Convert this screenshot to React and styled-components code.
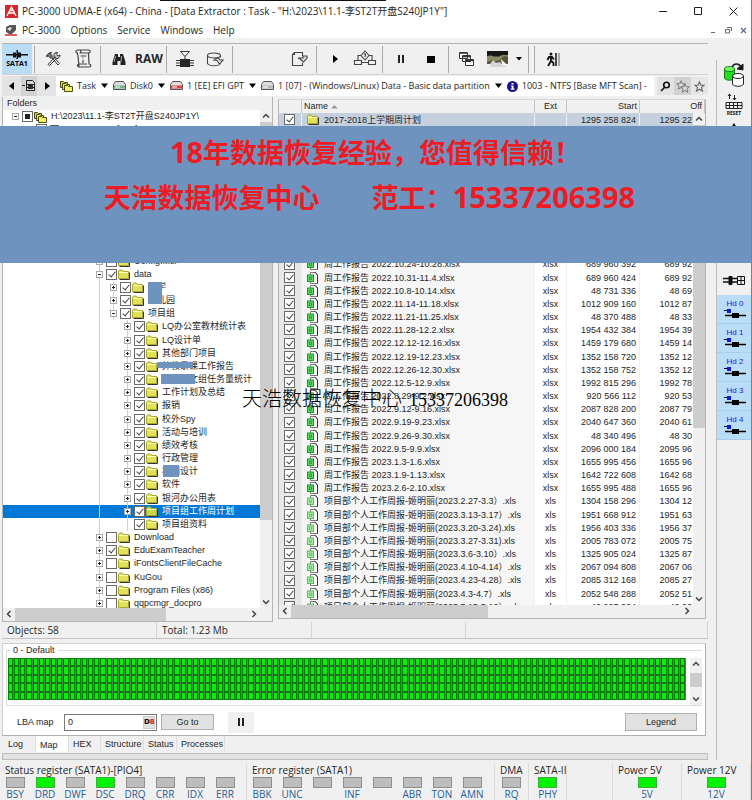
import React, { useState } from 'react'
import styled, { createGlobalStyle, css } from 'styled-components'

const GlobalStyle = createGlobalStyle`
  * {
    box-sizing: border-box;
  }
  body {
    margin: 0;
    background: #f0f0f0;
  }
  button, input {
    margin: 0;
    padding: 0;
    font: inherit;
    color: inherit;
  }
`

const uiFont = '"Open Sans", "Noto Sans CJK SC", sans-serif'
const gridFont = '"Liberation Sans", "Noto Sans CJK SC", sans-serif'

const Window = styled.div`
  position: relative;
  display: flex;
  flex-direction: column;
  height: 100vh;
  overflow: hidden;
  border-right: 1px solid #6f8299;
  background: #f0f0f0;
  color: #262626;
  font: 10px/14px ${uiFont};
`

const TitleBar = styled.header`
  position: relative;
  display: flex;
  align-items: center;
  height: 20px;
  padding: 2px 11px 0 5px;
  background: #fff;
  white-space: nowrap;
  &::before {
    content: '';
    position: absolute;
    top: 0;
    left: 160px;
    width: 226px;
    height: 1px;
    background: #111;
  }
`

const Title = styled.h1`
  flex: 1;
  margin: 0 0 0 4px;
  font-size: 10px;
  font-weight: 400;
`

const WindowButtons = styled.div`
  display: flex;
  gap: ${p => (p.$small ? '1px' : '21px')};
`

const PlainButton = styled.button`
  display: flex;
  align-items: center;
  justify-content: center;
  width: ${p => p.$w || 14}px;
  height: ${p => p.$h || 14}px;
  border: 0;
  background: ${p => p.$bg || 'none'};
`

const MenuBar = styled.nav`
  display: flex;
  align-items: center;
  height: 18px;
  padding: 2px 1px 0 5px;
  background: #fff;
`

const MenuItems = styled.div`
  display: flex;
  flex: 1;
  gap: 10px;
  padding-left: 5px;
`

const MenuItem = styled.button`
  border: 0;
  background: none;
`

const Body = styled.div`
  display: flex;
  flex: 1;
  min-height: 0;
`

const Main = styled.main`
  display: flex;
  flex: 1;
  flex-direction: column;
  min-width: 0;
  padding: 5px 8px 0 2px;
`

const Toolbar = styled.div`
  display: flex;
  align-items: center;
  height: 32px;
  border-top: 1px solid #b4b4b4;
  border-bottom: 1px solid #d0d0d0;
`

const ToolButton = styled(PlainButton)`
  width: 30px;
  height: 30px;
  font-size: 12px;
  font-weight: 700;
`

const SataButton = styled(ToolButton)`
  flex-direction: column;
  background: #b9dcf7;
  font-size: 7px;
  line-height: 9px;
  color: #000;
`

const Divider = styled.span`
  width: 1px;
  height: 27px;
  margin: 0 3px 0 2px;
  background: #a9a9a9;
`

const ToolGap = styled.span`
  width: 48px;
`

const DropButton = styled(PlainButton)`
  width: 14px;
  height: 30px;
`

const PathBar = styled.div`
  display: flex;
  align-items: center;
  height: 20px;
  margin: 1px 0;
  white-space: nowrap;
`

const NavButtons = styled.div`
  display: flex;
  background: #e3e3e3;
`

const Crumbs = styled.div`
  display: flex;
  flex: 1;
  align-items: center;
  gap: 4px;
  height: 20px;
  min-width: 0;
  margin-right: 3px;
  padding-left: 4px;
  overflow: hidden;
  background: #fff;
  font-size: 9px;
`

const Crumb = styled.button`
  display: flex;
  align-items: center;
  gap: 4px;
  flex: none;
  border: 0;
  background: none;
`

const Workspace = styled.div`
  display: flex;
  flex: 1;
  gap: 5px;
  min-height: 0;
  padding-right: 2px;
  font: 9px/13px ${gridFont};
`

const TreePanel = styled.section`
  display: flex;
  flex: 0 0 271px;
  flex-direction: column;
  border: 1px solid #b5b5b5;
  border-top: 0;
  background: #fff;
`

const PanelTitle = styled.h2`
  height: 13px;
  margin: 0;
  padding-left: 4px;
  background: #f0f0f0;
  font-size: 9px;
  font-weight: 400;
`

const Scroller = styled.div`
  display: flex;
  flex: 1;
  min-height: 0;
`

const TreeRows = styled.ul`
  flex: 1;
  min-width: 0;
  margin: 0;
  padding: 0;
  overflow: hidden;
  list-style: none;
`

const TreeRow = styled.li`
  position: relative;
  display: flex;
  align-items: center;
  gap: 1px;
  height: 13px;
  padding-left: 7px;
  white-space: nowrap;
  &:nth-child(6n) {
    height: 14px;
  }
  ${p => p.$selected && css`
    background: #0078d7;
    color: #fff;
  `}
`

const Guides = styled.span`
  display: flex;
  align-self: stretch;
  margin-right: -1px;
`

const Guide = styled.span`
  width: 14px;
  background: ${p => (p.$line ? 'linear-gradient(#d0d0d0, #d0d0d0) 5px 0 / 1px 100% no-repeat' : 'none')};
`

const Joint = styled.span`
  display: flex;
  align-items: center;
  align-self: stretch;
  justify-content: center;
  width: 11px;
  background: ${p => (p.$line ? 'linear-gradient(#d0d0d0, #d0d0d0) 5px 0 / 1px 100% no-repeat' : 'none')};
`

const Expander = styled.button`
  display: flex;
  width: 7px;
  height: 7px;
  border: 1px solid #a8a8a8;
  background: #fff;
`

const Check = styled.input.attrs({ type: 'checkbox' })`
  appearance: none;
  position: relative;
  flex: none;
  width: 11px;
  height: 11px;
  border: 1px solid #6a6a6a;
  background: #fff;
  &:checked::before {
    content: '';
    position: absolute;
    top: 0;
    left: 3px;
    width: 3px;
    height: 6px;
    border: solid #444;
    border-width: 0 1px 1px 0;
    transform: rotate(40deg);
  }
  ${p => p.$mixed && css`
    &::before {
      content: '';
      position: absolute;
      inset: 2px;
      background: #222;
    }
  `}
`

const TreeLabel = styled.label`
  display: flex;
  align-items: center;
  gap: 1px;
`

const TreeName = styled.span`
  margin-left: 3px;
`

const Patch = styled.span`
  position: absolute;
  z-index: 1;
  left: ${p => p.$x}px;
  top: ${p => p.$y}px;
  width: ${p => p.$w}px;
  height: ${p => p.$h}px;
  background: #6f93bf;
`

const VBar = styled.div`
  display: flex;
  flex: none;
  flex-direction: column;
  width: 12px;
  background: #f0f0f0;
  ${p => p.$over && css`
    position: absolute;
    top: 13px;
    right: 0;
    bottom: 0;
  `}
`

const HBar = styled.div`
  display: flex;
  flex: none;
  height: 13px;
  background: #f0f0f0;
`

const Thumb = styled.div`
  flex: ${p => p.$size};
  background: #cdcdcd;
`

const Track = styled.div`
  flex: ${p => p.$size};
`

const ListPanel = styled.section`
  display: flex;
  flex: 1;
  flex-direction: column;
  min-width: 0;
  margin: 2px 0 3px;
  border: 1px solid #b5b5b5;
  border-top-color: #d8d8d8;
  background: #fff;
`

const ListArea = styled.div`
  position: relative;
  flex: 1;
  min-height: 0;
  overflow: hidden;
`

const FileTable = styled.table`
  width: 100%;
  border-collapse: separate;
  border-spacing: 0;
  table-layout: fixed;
  white-space: nowrap;
`

const HeadCell = styled.th`
  height: 13px;
  padding: 0 2px;
  overflow: hidden;
  border-right: 1px solid #c4c4c4;
  background: #f0f0f0;
  font-weight: 400;
  text-align: ${p => p.$align || 'left'};
`

const FileRow = styled.tr`
  height: 13px;
  &:nth-child(6n) {
    height: 14px;
  }
  td {
    padding: 0 3px;
    overflow: hidden;
    border-right: 1px solid #f0f0f0;
    line-height: 12px;
    background: ${p => (p.$selected ? '#c5d0de' : '#fff')};
  }
  td:first-child {
    padding-left: 5px;
    background: ${p => (p.$selected ? '#c5d0de' : '#e6e6e6')};
  }
  td:nth-child(2) {
    background: ${p => (p.$selected ? '#c5d0de' : '#f6f6f6')};
  }
`

const CheckWrap = styled.span`
  display: flex;
`

const NameBox = styled.span`
  display: flex;
  align-items: center;
  gap: 5px;
  height: 12px;
  padding-left: 2px;
`

const NumCell = styled.td`
  text-align: right;
`

const OffsetCell = styled(NumCell)`
  && {
    padding-right: 12px;
  }
`

const ExtCell = styled.td`
  text-align: center;
`

const StatusBar = styled.div`
  display: grid;
  grid-template-columns: 155px 155px 154px 1fr;
  height: 17px;
  border-bottom: 1px solid #c2c2c2;
`

const StatusCell = styled.span`
  padding: 1px 5px;
  border-right: 1px solid #d4d4d4;
`

const MapPanel = styled.section`
  margin: 4px 2px 0 0;
  padding: 6px 3px 2px;
  border: 1px solid #d0d0d0;
  border-right-color: #b0b0b0;
  border-bottom-color: #b0b0b0;
  background: #fff;
  font: 9px/13px ${gridFont};
`

const MapGroup = styled.fieldset`
  position: relative;
  display: flex;
  height: 56px;
  margin: 0;
  padding: 7px 0 0 1px;
  border: 1px solid #dcdcdc;
  border-right: 0;
`

const MapTitle = styled.span`
  position: absolute;
  top: -7px;
  left: 3px;
  padding: 0 3px;
  background: #fff;
`

const MapGrid = styled.div`
  display: grid;
  flex: 1;
  grid-template-columns: repeat(110, 1fr);
  grid-template-rows: repeat(5, 1fr);
  height: 42px;
  margin-right: 4px;
  background: #5f7d5f;
`

const MapCell = styled.span`
  margin-right: 1px;
  border: 1px solid #0a7a0a;
  background: #00f400;
`

const MapTools = styled.div`
  display: flex;
  align-items: center;
  height: 22px;
  margin-top: 5px;
  padding: 0 5px 0 11px;
`

const LbaLabel = styled.label`
  width: 47px;
`

const LbaBox = styled.span`
  display: flex;
  align-items: center;
  width: 93px;
  height: 17px;
  padding-right: 1px;
  border: 1px solid #7a7a7a;
`

const LbaInput = styled.input`
  flex: 1;
  width: 0;
  padding-left: 3px;
  border: 0;
  outline: 0;
`

const RadixButton = styled.button`
  width: 12px;
  height: 13px;
  border: 1px solid #ccc;
  background: #e1e1e1;
  font: bold 7px/9px "DejaVu Sans", sans-serif;
  color: #000;
  b {
    color: #e01010;
  }
`

const PushButton = styled.button`
  width: ${p => p.$w}px;
  height: ${p => p.$h || 16}px;
  margin-left: ${p => (p.$end ? 'auto' : '4px')};
  border: 1px solid #b0b0b0;
  background: #e1e1e1;
`

const PauseButton = styled(PlainButton)`
  width: 26px;
  height: 21px;
  margin-left: 14px;
  background: #f0f0f0;
`

const Tabs = styled.div`
  display: flex;
  height: 16px;
  padding-left: 2px;
  font: 9px/13px ${gridFont};
`

const Tab = styled.button`
  width: ${p => p.$w}px;
  height: ${p => (p.$active ? 16 : 15)}px;
  padding: 2px 4px 0;
  border: 0;
  border-right: 1px solid #dedede;
  background: ${p => (p.$active ? '#fff' : 'none')};
  text-align: left;
`

const Ledge = styled.div`
  height: 7px;
  margin: 1px 0 4px;
  border: 1px solid #bdbdbd;
  background: #e3e3e3;
`

const Rail = styled.aside`
  display: flex;
  flex: 0 0 35px;
  flex-direction: column;
  align-items: stretch;
  margin: 22px 0 4px;
  border-left: 1px solid #bdbdbd;
`

const RailButton = styled.button`
  display: flex;
  align-items: center;
  justify-content: center;
  height: ${p => p.$h || 29}px;
  border: 0;
  background: none;
`

const RailSpace = styled.span`
  height: 134px;
`

const HeadButton = styled.button`
  display: flex;
  flex-direction: column;
  align-items: center;
  height: 29px;
  padding: 4px 0 0 2px;
  border: 0;
  border-bottom: 1px solid #a9cdea;
  background: #b9dcf7;
  color: #1a1ae0;
  font: 8px/10px "Liberation Sans", sans-serif;
`

const Registers = styled.footer`
  display: flex;
  height: 36px;
  white-space: nowrap;
`

const Register = styled.section`
  flex: ${p => (p.$w ? `0 0 ${p.$w}px` : '1')};
  border-right: 1px solid #dadada;
`

const RegisterTitle = styled.h2`
  height: 13px;
  margin: 0;
  padding-left: 5px;
  font-size: 10px;
  font-weight: 400;
  line-height: 12px;
`

const Bits = styled.div`
  display: flex;
  justify-content: ${p => (p.$center ? 'center' : 'flex-start')};
`

const Bit = styled.div`
  display: flex;
  flex-direction: column;
  align-items: center;
  width: 30px;
  line-height: 13px;
  color: #2a5d92;
  &::before {
    content: '';
    width: 17px;
    height: 9px;
    border: 1px solid ${p => (p.$on ? '#3fae3f' : '#8e8e8e')};
    background: ${p => (p.$on ? '#00f400' : '#bdbdbd')};
  }
`

const Banner = styled.div`
  position: absolute;
  top: 126px;
  left: 0;
  right: 0;
  z-index: 2;
  height: 137px;
  padding-top: 3px;
  background: #6f93bf;
  color: #ed1c24;
  font: 700 27px/45px "Noto Sans CJK SC", sans-serif;
  text-align: center;
  white-space: pre;
`

const BannerNumber = styled.span`
  font: 700 29px/45px "Noto Sans", sans-serif;
`

const BannerGap = styled.span`
  display: inline-block;
  width: 52px;
`

const Watermark = styled.div`
  position: absolute;
  top: 386px;
  left: 242px;
  z-index: 2;
  color: #000;
  font: 300 20px/24px "Noto Sans CJK SC", sans-serif;
  white-space: nowrap;
`

const WatermarkNumber = styled.span`
  margin-left: 7px;
  font: 18px/24px "Liberation Serif", serif;
`

const Chevron = ({ dir }) => {
  const paths = {
    up: 'M3 7.5 6 4.5 9 7.5',
    down: 'M3 4.5 6 7.5 9 4.5',
    left: 'M7.5 3 4.5 6 7.5 9',
    right: 'M4.5 3 7.5 6 4.5 9',
  }
  return (
    <svg width="12" height="12" viewBox="0 0 12 12" fill="none" stroke="#444" strokeWidth="1.5">
      <path d={paths[dir]} />
    </svg>
  )
}

const Folder = ({ open }) => (
  <svg width="12" height="11" viewBox="0 0 12 11">
    <path d="M1.5 10.5h10v-7" fill="none" stroke="#333" />
    <path d="M.5 2.5l1-1.5h3l1 1.5h5v7H.5z" fill={open ? '#c9d84a' : '#e2e25a'} stroke="#a8a832" />
    <path d="M1 3.5h9" stroke="#fbfbb8" />
  </svg>
)

const Folders = () => (
  <svg width="13" height="12" viewBox="0 0 13 12" stroke="#4c4c10">
    <path d="M.5 1.5h3l1 1h3v5h-7z" fill="#d8d83c" />
    <path d="M2.5 3.5h3l1 1h3v5h-7z" fill="#e6e650" />
    <path d="M4.5 5.5h3l1 1h4v5h-8z" fill="#f0f060" />
  </svg>
)

const Disk = ({ color }) => (
  <svg width="13" height="10" viewBox="0 0 13 10">
    <path d="M2.5.5h8l2 3v5h-12v-5z" fill="#ddd" stroke="#555" />
    <path d="M1 4.5h11v3H1z" fill={color || '#bbb'} />
    <path d="M2 6h5" stroke="#fff" />
  </svg>
)

const FileIcon = ({ pale }) => (
  <svg width="12" height="12" viewBox="0 0 12 12">
    <path d="M3.5.5H8L10.500 3v8.500h-7z" fill="#fff" stroke="#777" />
    <path d="M7.500.5h1l2 2.500v8.500" fill="none" stroke="#333" />
    <rect x=".5" y="3" width="6" height="6.500" fill={pale ? '#a4e8a4' : '#5fd65f'} stroke={pale ? '#5cc05c' : '#149a2c'} />
    <path d="M2.500 5h2v2.500h-2z" fill="none" stroke={pale ? '#5cc05c' : '#149a2c'} strokeWidth=".8" />
  </svg>
)

const Caret = () => (
  <svg width="9" height="6" viewBox="0 0 9 6"><path d="M1 .5h7L4.500 5z" fill="#000" /></svg>
)

const HeadDrive = () => (
  <svg width="24" height="10" viewBox="0 0 24 10">
    <path d="M1 1.500h6" stroke="#000" />
    <rect x="4" y="0" width="4" height="4" fill="#1414e6" />
    <path d="M2 6.500h21" stroke="#000" strokeWidth="1.500" />
    <rect x="9" y="4" width="7" height="5" fill="#000" />
  </svg>
)

const tools = {
  hammers: (
    <svg width="16" height="16" viewBox="0 0 16 16" fill="none" stroke="#333">
      <path d="M3 13.500 10 6M4.500 14.500 11.500 7.500M3 13.500l1.500 1" />
      <path d="M9 4.500c0-2 1.500-3.500 3.500-3l-1 2 1.500 1.500 2-1c.3 2-1.500 3.500-3.500 3.500z" fill="#ccc" />
      <path d="M1.500 5.500c.5-2.500 2.500-4 5-4L5.500 3 8 5.500 6 7.500 3.500 5z" fill="#777" />
      <path d="M7 7l6 7 1.500-1.500L8.500 6" />
    </svg>
  ),
  script: (
    <svg width="18" height="20" viewBox="0 0 18 20" fill="none" stroke="#444" strokeWidth="1.200">
      <path d="M3.500 6V4c-2 0-2.500-2.500 0-3h11c2.500.5 2 3 0 3h-9c2 0 2 -3-.5-3M4 6c0 5 1 8 1 12h10c2.500 0 2.500-3 0-3 0-5-.5-7-.5-11M5 18c-2-.5-2-3 0-3h8" />
      <path d="M9 8.500v1M9 11v3M6.500 7h6" />
    </svg>
  ),
  search: (
    <svg width="14" height="13" viewBox="0 0 14 13" fill="#222">
      <path d="M3 1h3v3h2V1h3l2.500 8v3H8.500V8h-3v4H.5V9z" />
      <path d="M3.500 3 2 9M9.500 3 9 9" stroke="#aaa" />
    </svg>
  ),
  chip: (
    <svg width="20" height="18" viewBox="0 0 20 18" fill="none" stroke="#333">
      <path d="M5.500 1.500h9L10 6.500zM10 6.500v4" />
      <rect x="5" y="9" width="10" height="8" fill="#222" stroke="none" />
      <path d="M1 10.500h18M1 13h18M1 15.500h18" strokeWidth="1.200" />
    </svg>
  ),
  diskOut: (
    <svg width="19" height="15" viewBox="0 0 19 15" fill="none" stroke="#444" strokeWidth="1.100">
      <ellipse cx="8" cy="3.500" rx="6.500" ry="2.500" />
      <path d="M1.500 3.500v8c2 3 11 3 13 0M14.500 3.500v2M8 8c2-2.500 5-2 6 0h3l-3.500 4L11 8.500c-1-.5-2-.8-3-.5z" />
    </svg>
  ),
  pageOut: (
    <svg width="17" height="16" viewBox="0 0 17 16" fill="none" stroke="#444" strokeWidth="1.100">
      <path d="M11.500 5V1.500h-8l-2 2v11h10V12M3.500 1.500v2h-2" />
      <path d="M7 7h5V5h4v2l-3.500 4L9 8z" fill="#ddd" />
    </svg>
  ),
  play: <svg width="8" height="10" viewBox="0 0 8 10"><path d="M2 1v8l5-4z" fill="#000" /></svg>,
  flow: (
    <svg width="24" height="18" viewBox="0 0 24 18" fill="none" stroke="#444" strokeWidth="1.100">
      <path d="M12 1l4 4.500-4 4.500-4-4.500zM8 5.500H5v5M16 5.500h3v5M11 4.500c1-1.500 2.500 0 1 1.500v1" />
      <path d="M1.500 10.500h7v4h-7zM15.500 10.500h7v4h-7zM9 12.500h6" />
    </svg>
  ),
  pause: <svg width="8" height="10" viewBox="0 0 8 10"><path d="M1 1h2v8H1zM5 1h2v8H5z" fill="#222" /></svg>,
  stop: <svg width="8" height="8" viewBox="0 0 8 8"><path d="M0 1h8v7H0z" fill="#000" /></svg>,
  windows: (
    <svg width="16" height="16" viewBox="0 0 16 16" fill="#fff" stroke="#333">
      <path d="M.5 1.500h8v6h-8zM3.500 4.500h8v6h-8zM6.500 8.500h8v6h-8z" />
      <path d="M1 2h7M4 5.500h7M7 9.500h7" strokeWidth="1.500" />
    </svg>
  ),
  photo: (
    <svg width="21" height="16" viewBox="0 0 21 16">
      <path d="M0 0h21v13H0z" fill="#8a8a62" />
      <path d="M0 0h21v4h-6l-3 1.500H7L4 4.500 0 5z" fill="#171714" />
      <path d="M0 11l5-2 3 1.500 5-1.500 4-4 4 1v7H0z" fill="#55553a" />
      <path d="M3 13l3-4 3 3 4-1 2 3 4-2v4H4z" fill="#d6d6d6" />
      <path d="M14 8l5 5v2l-4-1z" fill="#f6f6f6" />
    </svg>
  ),
  exit: (
    <svg width="15" height="15" viewBox="0 0 15 15">
      <circle cx="5" cy="2" r="1.500" fill="#111" />
      <path d="M5 4v5L2 14M5 8.500l2.500 2.500v3M1.500 8 3 5h3l2 2.500" fill="none" stroke="#111" strokeWidth="1.800" />
      <path d="M9 1h2v13H9z" fill="#444" />
      <path d="M12 1h2v13h-2z" fill="#a8a8a8" />
    </svg>
  ),
}

const toolGroups = [
  ['hammers', 'script'],
  ['search', 'RAW'],
  ['chip', 'diskOut'],
  ['gap', 'pageOut'],
  ['play', 'flow'],
  ['pause', 'stop'],
  ['windows', 'photo', 'drop'],
  [],
  ['exit'],
]

const crumbs = [
  { icon: <Folders />, text: 'Task' },
  { icon: <Disk color="#7fb08a" />, text: 'Disk0' },
  { icon: <Disk color="#e04040" />, text: '1 [EE] EFI GPT' },
  { icon: <Disk />, text: '1 [07] - (Windows/Linux) Data - Basic data partition' },
]

const blank = n => Array.from({ length: n }, () => null)

const tree = [
  { level: 0, name: 'H:\\2023\\11.1-李ST2T开盘S240JP1Y\\', icon: 'root', open: true, mixed: true },
  { level: 1, name: '0: 500000 G [T4..]', icon: 'disk', open: true },
  ...blank(9),
  { level: 6, name: 'Config.Msi' },
  { level: 6, name: 'data', open: true, checked: true },
  { level: 7, name: '大学', checked: true, patch: { x: 145, y: 1, w: 14, h: 13 } },
  { level: 7, name: '幼儿园', checked: true, patch: { x: 145, y: 0, w: 14, h: 10 } },
  { level: 7, name: '项目组', open: true, checked: true },
  { level: 8, name: 'LQ办公室教材统计表', checked: true },
  { level: 8, name: 'LQ设计单', checked: true },
  { level: 8, name: '其他部门项目', checked: true },
  { level: 8, name: '外教录课工作报告', checked: true, patch: { x: 154, y: 2, w: 36, h: 6 } },
  { level: 8, name: '小学语文组任务量统计', checked: true, patch: { x: 158, y: 1, w: 34, h: 10 } },
  { level: 8, name: '工作计划及总结', checked: true },
  { level: 8, name: '报销', checked: true },
  { level: 8, name: '校外Spy', checked: true },
  { level: 8, name: '活动与培训', checked: true },
  { level: 8, name: '绩效考核', checked: true },
  { level: 8, name: '行政管理', checked: true },
  { level: 8, name: '校园设计', checked: true, patch: { x: 160, y: 0, w: 16, h: 12 } },
  { level: 8, name: '软件', checked: true },
  { level: 8, name: '银河办公用表', checked: true },
  { level: 8, name: '项目组工作周计划', checked: true, selected: true },
  { level: 8, name: '项目组资料', checked: true, leaf: true },
  { level: 6, name: 'Download' },
  { level: 6, name: 'EduExamTeacher', checked: true },
  { level: 6, name: 'iFontsClientFileCache' },
  { level: 6, name: 'KuGou' },
  { level: 6, name: 'Program Files (x86)' },
  { level: 6, name: 'qqpcmgr_docpro' },
]

const weekly = (dates, start, offset) => ({ name: `周工作报告 ${dates}.xlsx`, ext: 'xlsx', start, offset })
const personal = (dates, start, offset) => ({ name: `项目部个人工作周报-姬明丽(${dates}.xls`, ext: 'xls', start, offset })

const files = [
  { name: '2017-2018上学期周计划', ext: '', start: '1295 258 824', offset: '1295 22', folder: true },
  ...blank(10),
  weekly('2022.10.24-10.28', '689 960 392', '689 92'),
  weekly('2022.10.31-11.4', '689 960 424', '689 92'),
  weekly('2022.10.8-10.14', '48 731 336', '48 69'),
  weekly('2022.11.14-11.18', '1012 909 160', '1012 87'),
  weekly('2022.11.21-11.25', '48 370 488', '48 33'),
  weekly('2022.11.28-12.2', '1954 432 384', '1954 39'),
  weekly('2022.12.12-12.16', '1459 179 680', '1459 14'),
  weekly('2022.12.19-12.23', '1352 158 720', '1352 12'),
  weekly('2022.12.26-12.30', '1352 158 752', '1352 12'),
  weekly('2022.12.5-12.9', '1992 815 296', '1992 78'),
  weekly('2022.8.29-9.2', '920 566 112', '920 53'),
  weekly('2022.9.12-9.16', '2087 828 200', '2087 79'),
  weekly('2022.9.19-9.23', '2040 647 360', '2040 61'),
  weekly('2022.9.26-9.30', '48 340 496', '48 30'),
  weekly('2022.9.5-9.9', '2096 000 184', '2095 96'),
  weekly('2023.1.3-1.6', '1655 995 456', '1655 96'),
  weekly('2023.1.9-1.13', '1642 722 608', '1642 68'),
  weekly('2023.2.6-2.10', '1655 995 488', '1655 96'),
  personal('2023.2.27-3.3）', '1304 158 296', '1304 12'),
  personal('2023.3.13-3.17）', '1951 668 912', '1951 63'),
  personal('2023.3.20-3.24)', '1956 403 336', '1956 37'),
  personal('2023.3.27-3.31)', '2005 783 072', '2005 75'),
  personal('2023.3.6-3.10）', '1325 905 024', '1325 87'),
  personal('2023.4.10-4.14）', '2067 094 808', '2067 06'),
  personal('2023.4.23-4.28）', '2085 312 168', '2085 27'),
  personal('2023.4.3-4.7）', '2052 548 288', '2052 51'),
  personal('2023.5.15-5.19）', '40 997 024', '40 96'),
]

const registers = [
  { title: 'Status register (SATA1)-[PIO4]', w: 247, bits: ['BSY', 'DRD', 'DWF', 'DSC', 'DRQ', 'CRR', 'IDX', 'ERR'] },
  { title: 'Error register (SATA1)', w: 248, bits: ['BBK', 'UNC', '', 'INF', '', 'ABR', 'TON', 'AMN'] },
  { title: 'DMA', w: 34, center: true, bits: ['RQ'] },
  { title: 'SATA-II', w: 38, center: true, bits: ['PHY'] },
  { title: '', bits: [] },
  { title: 'Power 5V', w: 69, center: true, bits: ['5V'] },
  { title: 'Power 12V', w: 69, center: true, bits: ['12V'] },
]
const lit = ['DRD', 'DSC', 'PHY', '5V', '12V']

const tabs = [['Log', 32], ['Map', 33], ['HEX', 32], ['Structure', 43], ['Status', 33], ['Processes', 48]]

const TreeItem = ({ item }) => {
  const [checked, setChecked] = useState(!!item.checked)
  const { level, name, icon, open, mixed, leaf, patch, selected } = item
  return (
    <TreeRow $selected={selected}>
      <Guides>
        {Array.from({ length: level }, (_, i) => <Guide key={i} $line={i === 6} />)}
      </Guides>
      <Joint $line={level > 5}>
        {!leaf && (
          <Expander aria-label={open ? 'Collapse' : 'Expand'}>
            <svg width="5" height="5" viewBox="0 0 5 5" stroke="#222">
              <path d={open ? 'M1 2.5h3' : 'M1 2.5h3M2.5 1v3'} />
            </svg>
          </Expander>
        )}
      </Joint>
      <TreeLabel>
        <Check checked={checked} $mixed={mixed} onChange={() => setChecked(!checked)} />
        {icon === 'root' && <Folders />}
        {icon === 'disk' && <Disk />}
        {!icon && <Folder open={selected} />}
        <TreeName>{name}</TreeName>
      </TreeLabel>
      {patch && <Patch $x={patch.x} $y={patch.y} $w={patch.w} $h={patch.h} />}
    </TreeRow>
  )
}

const FileList = () => (
  <ListPanel>
    <ListArea>
      <FileTable>
        <colgroup>
          <col width="23" />
          <col />
          <col width="32" />
          <col width="73" />
          <col width="65" />
        </colgroup>
        <thead>
          <tr>
            <HeadCell />
            <HeadCell>Name <svg width="7" height="5" viewBox="0 0 7 5"><path d="M0 4.500h7L3.500 1z" fill="#999" /></svg></HeadCell>
            <HeadCell $align="center">Ext</HeadCell>
            <HeadCell $align="right">Start</HeadCell>
            <HeadCell $align="right">Off</HeadCell>
          </tr>
        </thead>
        <tbody>
          {files.map((file, i) => (file ? (
            <FileRow key={i} $selected={file.folder}>
              <td><CheckWrap><Check defaultChecked aria-label={file.name} /></CheckWrap></td>
              <td>
                <NameBox>
                  {file.folder ? <Folder /> : <FileIcon pale={file.ext === 'xls'} />}
                  <span>{file.name}</span>
                </NameBox>
              </td>
              <ExtCell>{file.ext}</ExtCell>
              <NumCell>{file.start}</NumCell>
              <OffsetCell>{file.offset}</OffsetCell>
            </FileRow>
          ) : <FileRow key={i}><td colSpan="5" /></FileRow>))}
        </tbody>
      </FileTable>
      <VBar $over>
        <Chevron dir="up" />
        <Thumb $size={64} />
        <Track $size={35} />
        <Chevron dir="down" />
      </VBar>
    </ListArea>
    <HBar>
      <Chevron dir="left" />
      <Thumb $size={50} />
      <Track $size={49} />
      <Chevron dir="right" />
      <VBar />
    </HBar>
  </ListPanel>
)

const App = () => {
  const [tab, setTab] = useState('Map')
  const [lba, setLba] = useState('0')
  return (
    <>
      <GlobalStyle />
      <Window>
        <TitleBar>
          <svg width="13" height="13" viewBox="0 0 13 13">
            <path d="M0 0h13v13H0z" fill="#d8262c" />
            <path d="M2 11 6.500 2 11 11M3.500 8h6M4.500 5.500h4" fill="none" stroke="#fff" strokeWidth="1.300" />
          </svg>
          <Title>PC-3000 UDMA-E (x64) - China - [Data Extractor : Task - "H:\2023\11.1-李ST2T开盘S240JP1Y"]</Title>
          <WindowButtons>
            <PlainButton aria-label="Minimize"><svg width="9" height="9" viewBox="0 0 9 9" stroke="#222"><path d="M0 4.500h8" /></svg></PlainButton>
            <PlainButton aria-label="Maximize"><svg width="9" height="9" viewBox="0 0 9 9" fill="none" stroke="#222"><path d="M.5.5h7v7h-7z" /></svg></PlainButton>
            <PlainButton aria-label="Close"><svg width="9" height="9" viewBox="0 0 9 9" stroke="#222"><path d="M.5.5l8 8M8.500.5l-8 8" /></svg></PlainButton>
          </WindowButtons>
        </TitleBar>
        <MenuBar>
          <svg width="12" height="12" viewBox="0 0 12 12">
            <path d="M1 3 5 1h6v5l-4 4H4L1 8z" fill="#555" />
            <path d="M2 5l3-2 2 1-2 3z" fill="#ddd" />
            <path d="M0 11h12" stroke="#d8262c" strokeWidth="1.500" />
          </svg>
          <MenuItems>
            {['PC-3000', 'Options', 'Service', 'Windows', 'Help'].map(item => <MenuItem key={item}>{item}</MenuItem>)}
          </MenuItems>
          <WindowButtons $small>
            <PlainButton aria-label="Minimize child"><svg width="7" height="7" viewBox="0 0 7 7" stroke="#5b6b80"><path d="M1 5.500h4" /></svg></PlainButton>
            <PlainButton aria-label="Restore child"><svg width="7" height="7" viewBox="0 0 7 7" fill="none" stroke="#5b6b80"><path d="M2 .5h4.500V4M.5 2.500h4v3.500h-4z" /></svg></PlainButton>
            <PlainButton aria-label="Close child"><svg width="7" height="7" viewBox="0 0 7 7" stroke="#5b6b80" strokeWidth="1.200"><path d="M1 1l5 5M6 1 1 6" /></svg></PlainButton>
          </WindowButtons>
        </MenuBar>
        <Body>
          <Main>
            <Toolbar>
              <SataButton>
                <svg width="22" height="9" viewBox="0 0 22 9"><path d="M0 4h22v1.500H0zM7 2.500h3v5H7zM12 2.500h3v5h-3zM10.500 0h1.500v9h-1.500z" fill="#111" /></svg>
                SATA1
              </SataButton>
              {toolGroups.map((group, i) => (
                <React.Fragment key={i}>
                  <Divider />
                  {group.map(tool => {
                    if (tool === 'gap') return <ToolGap key={tool} />
                    if (tool === 'drop') return <DropButton key={tool} aria-label="More"><svg width="6" height="4" viewBox="0 0 6 4"><path d="M0 0h6L3 3.500z" /></svg></DropButton>
                    return <ToolButton key={tool} aria-label={tool}>{tools[tool] || tool}</ToolButton>
                  })}
                </React.Fragment>
              ))}
            </Toolbar>
            <PathBar>
              <NavButtons>
                <PlainButton $w="19" $h="20" aria-label="Back"><svg width="6" height="8" viewBox="0 0 6 8"><path d="M5 0v8L0 4z" /></svg></PlainButton>
                <PlainButton $w="16" $h="20" $bg="#d2d2d2" aria-label="History">
                  <svg width="14" height="12" viewBox="0 0 14 12" fill="none" stroke="#222"><path d="M4.500.5h6l2 2v8h-8zM0 5.500h3M5 4.500h7M5 7.500h7" /><path d="M6.500 5.500h4v3h-4z" fill="#333" /></svg>
                </PlainButton>
                <PlainButton $w="19" $h="20" aria-label="Forward"><svg width="6" height="8" viewBox="0 0 6 8"><path d="M1 0v8l5-4z" /></svg></PlainButton>
              </NavButtons>
              <Crumbs>
                {crumbs.map(crumb => (
                  <Crumb key={crumb.text}>{crumb.icon}{crumb.text}<Caret /></Crumb>
                ))}
                <Crumb>
                  <svg width="11" height="11" viewBox="0 0 11 11"><circle cx="5.500" cy="5.500" r="5.500" fill="#15158c" /><path d="M4.500 2h2v1.500h-2zM4 4.500h2.500v3H7.500v1.200H3.800V7.500h.9V5.600H4z" fill="#fff" /></svg>
                  1003 - NTFS [Base MFT Scan] -
                </Crumb>
              </Crumbs>
              <PlainButton $w="17" $h="18" $bg="#e3e3e3" aria-label="Find"><svg width="11" height="11" viewBox="0 0 11 11" fill="none" stroke="#111" strokeWidth="1.600"><circle cx="6.500" cy="4" r="2.800" /><path d="M4.500 6.500 1 10" /></svg></PlainButton>
              <PlainButton $w="17" $h="18" $bg="#d2d2d2" aria-label="Favorites">
                <svg width="14" height="13" viewBox="0 0 14 13" fill="#ddd" stroke="#777"><path d="M5 .8l1.200 3h3L6.800 6l1 3.200L5 7.500 2.200 9.200l1-3.200L.8 3.800h3z" /><path d="M9 3.800l1.200 3h3L10.800 9l1 3.200L9 10.500l-2.800 1.700 1-3.200-2.400-2.200h3z" /></svg>
              </PlainButton>
              <PlainButton $w="17" $h="18" $bg="#e6e6e6" aria-label="Add favorite"><svg width="11" height="11" viewBox="0 0 10 10" fill="none" stroke="#666"><path d="M5 .8l1.200 3h3L6.800 6l1 3.200L5 7.500 2.200 9.200l1-3.200L.8 3.800h3z" /></svg></PlainButton>
            </PathBar>
            <Workspace>
              <TreePanel>
                <PanelTitle>Folders</PanelTitle>
                <Scroller>
                  <TreeRows>
                    {tree.map((item, i) => (item ? <TreeItem key={i} item={item} /> : <TreeRow key={i} />))}
                  </TreeRows>
                  <VBar>
                    <Chevron dir="up" />
                    <Thumb $size={84} />
                    <Track $size={16} />
                    <Chevron dir="down" />
                  </VBar>
                </Scroller>
                <HBar>
                  <Chevron dir="left" />
                  <Thumb $size={65} />
                  <Track $size={35} />
                  <Chevron dir="right" />
                  <VBar />
                </HBar>
              </TreePanel>
              <FileList />
            </Workspace>
            <StatusBar>
              <StatusCell>Objects: 58</StatusCell>
              <StatusCell>Total: 1.23 Mb</StatusCell>
              <StatusCell />
              <StatusCell />
            </StatusBar>
            <MapPanel>
              <MapGroup>
                <MapTitle>0 - Default</MapTitle>
                <MapGrid>
                  {Array.from({ length: 550 }, (_, i) => <MapCell key={i} />)}
                </MapGrid>
                <VBar>
                  <Chevron dir="up" />
                  <Track $size={1} />
                  <Thumb $size={5} />
                  <Track $size={2} />
                  <Chevron dir="down" />
                </VBar>
              </MapGroup>
              <MapTools>
                <LbaLabel htmlFor="lba">LBA map</LbaLabel>
                <LbaBox>
                  <LbaInput id="lba" value={lba} onChange={e => setLba(e.target.value)} />
                  <RadixButton>D<b>8</b></RadixButton>
                </LbaBox>
                <PushButton $w="53">Go to</PushButton>
                <PauseButton aria-label="Pause map">{tools.pause}</PauseButton>
                <PushButton $w="72" $h="18" $end>Legend</PushButton>
              </MapTools>
            </MapPanel>
            <Tabs>
              {tabs.map(([name, w]) => (
                <Tab key={name} $w={w} $active={tab === name} onClick={() => setTab(name)}>{name}</Tab>
              ))}
            </Tabs>
            <Ledge />
          </Main>
          <Rail>
            <RailButton aria-label="Copy disk">
              <svg width="22" height="24" viewBox="0 0 22 24" stroke="#222">
                <path d="M1.500 6v9c1 3 9 3 10 0V6" fill="#20e020" stroke="#1a7a1a" />
                <ellipse cx="6.500" cy="6" rx="5" ry="2.500" fill="#6cff5c" stroke="#1a7a1a" />
                <path d="M9.500 13v8c1 3 10 3 11 0v-8" fill="#fff" />
                <ellipse cx="15" cy="13" rx="5.500" ry="2.500" fill="#fff" />
                <path d="M9 4c2-4 7-4 9 0" fill="none" strokeWidth="1.500" />
                <path d="M14 6l6 1V1z" fill="#111" />
              </svg>
            </RailButton>
            <RailButton aria-label="Reset">
              <svg width="18" height="22" viewBox="0 0 18 22" fill="none" stroke="#222">
                <path d="M4.500 6V1M3 3l1.500-2L6 3M9.500 2v5M8 5l1.500 2L11 5" />
                <path d="M1 9.500h16v6H1zM1 12.500h16M4.500 10v5M8.500 10v5M12.500 10v5" />
                <text x="9" y="21.500" fontSize="5" fontWeight="700" textAnchor="middle" fill="#111" stroke="none">RESET</text>
              </svg>
            </RailButton>
            <RailButton $h={14} aria-label="Power"><svg width="6" height="5" viewBox="0 0 6 5"><path d="M0 5h6L3 0z" /></svg></RailButton>
            <RailSpace />
            <RailButton aria-label="Heads">
              <svg width="22" height="11" viewBox="0 0 22 11" fill="none" stroke="#111"><path d="M0 3.500h14M0 7h14" strokeWidth="1.500" /><path d="M6 1.500h3v8H6z" fill="#111" /><path d="M14.500 1.500h7v8h-7zM14 5.500h7M18 1v9" /></svg>
            </RailButton>
            {[0, 1, 2, 3, 4].map(n => (
              <HeadButton key={n}>Hd {n}<HeadDrive /></HeadButton>
            ))}
          </Rail>
        </Body>
        <Registers>
          {registers.map((reg, i) => (
            <Register key={i} $w={reg.w}>
              <RegisterTitle>{reg.title}</RegisterTitle>
              <Bits $center={reg.center}>
                {reg.bits.map((bit, j) => <Bit key={j} $on={lit.includes(bit)}>{bit}</Bit>)}
              </Bits>
            </Register>
          ))}
        </Registers>
        <Banner>
          <div><BannerNumber>18</BannerNumber>年数据恢复经验，您值得信赖！</div>
          <div>天浩数据恢复中心<BannerGap />范工：<BannerNumber>15337206398</BannerNumber>{'  '}</div>
        </Banner>
        <Watermark>天浩数据恢复中心<WatermarkNumber>15337206398</WatermarkNumber></Watermark>
      </Window>
    </>
  )
}

export default App
